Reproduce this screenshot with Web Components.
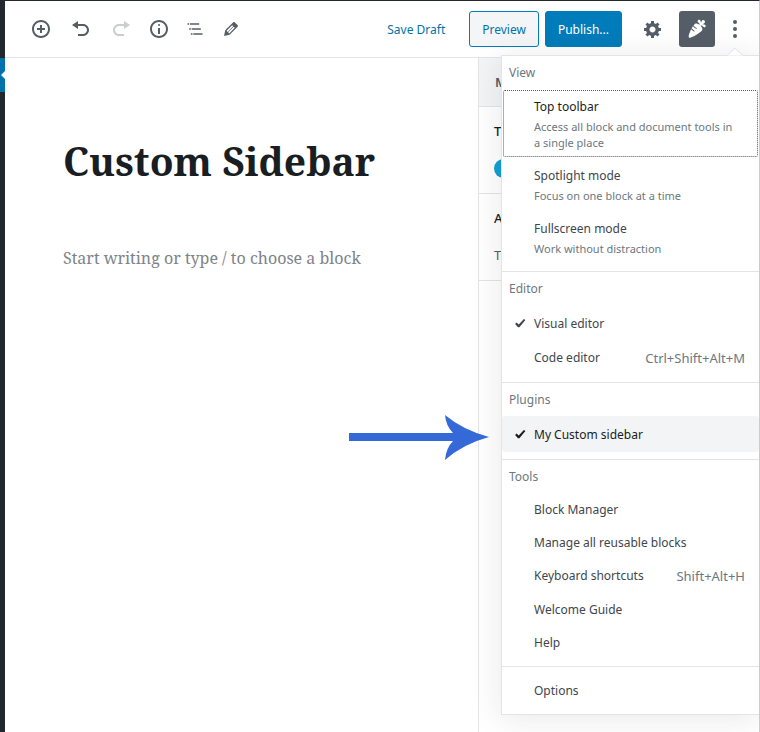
<!DOCTYPE html>
<html lang="en">
<head>
<meta charset="utf-8">
<title>Custom Sidebar</title>
<style>
    body {
        margin: 0;
        font-family: "Segoe UI", "Noto Sans", sans-serif;
        font-size: 12px;
        color: #191e23;
    }
</style>
</head>
<body>
<editor-app>
    <editor-header slot="header"></editor-header>
    <editor-canvas></editor-canvas>
    <settings-sidebar></settings-sidebar>
    <more-menu slot="menu">
        <menu-group label="View">
            <menu-item class="focused" info="Access all block and document tools in a single place">Top toolbar</menu-item>
            <menu-item info="Focus on one block at a time">Spotlight mode</menu-item>
            <menu-item info="Work without distraction">Fullscreen mode</menu-item>
        </menu-group>
        <menu-group label="Editor">
            <menu-item checked>Visual editor</menu-item>
            <menu-item shortcut="Ctrl+Shift+Alt+M">Code editor</menu-item>
        </menu-group>
        <menu-group label="Plugins">
            <menu-item class="hovered" checked>My Custom sidebar</menu-item>
        </menu-group>
        <menu-group label="Tools">
            <menu-item>Block Manager</menu-item>
            <menu-item>Manage all reusable blocks</menu-item>
            <menu-item shortcut="Shift+Alt+H">Keyboard shortcuts</menu-item>
            <menu-item>Welcome Guide</menu-item>
            <menu-item>Help</menu-item>
        </menu-group>
        <menu-group>
            <menu-item>Options</menu-item>
        </menu-group>
    </more-menu>
    <pointer-arrow slot="menu"></pointer-arrow>
</editor-app>

<script>
// 20x20 icons, except where a viewBox is given
const ICONS = {
    insert: { d: 'M10 1c-5 0-9 4-9 9s4 9 9 9 9-4 9-9-4-9-9-9zm0 16c-3.9 0-7-3.1-7-7s3.1-7 7-7 7 3.1 7 7-3.1 7-7 7zm1-11H9v3H6v2h3v3h2v-3h3V9h-3V6z' },
    undo: { d: 'M12 5H7V2L1 6l6 4V7h5c2.2 0 4 1.8 4 4s-1.8 4-4 4H7v2h5c3.3 0 6-2.7 6-6s-2.7-6-6-6z' },
    redo: { d: 'M8 5h5V2l6 4-6 4V7H8c-2.2 0-4 1.8-4 4s1.8 4 4 4h5v2H8c-3.3 0-6-2.7-6-6s2.7-6 6-6z' },
    info: { d: 'M9 15h2V9H9v6zm1-10c-.5 0-1 .5-1 1s.5 1 1 1 1-.5 1-1-.5-1-1-1zm0-4c-5 0-9 4-9 9s4 9 9 9 9-4 9-9-4-9-9-9zm0 16c-3.9 0-7-3.1-7-7s3.1-7 7-7 7 3.1 7 7-3.1 7-7 7z' },
    outline: { d: 'M5 5H3v2h2V5zm3 8h11v-2H8v2zm9-8H6v2h11V5zM7 11H5v2h2v-2zm0 8h2v-2H7v2zm3-2v2h11v-2H10z', viewBox: '0 0 24 24' },
    edit: { d: 'M13.89 3.39l2.71 2.72c.46.46.42 1.24.03 1.64l-8.01 8.02-5.56 1.16 1.16-5.58s7.6-7.63 7.99-8.03c.39-.39 1.22-.39 1.68.07zm-2.73 2.79l-5.59 5.61 1.11 1.11 5.54-5.65zm-2.97 8.23l5.58-5.6-1.07-1.08-5.59 5.6z' },
    gear: { d: 'M18 12h-2.18c-.17.7-.44 1.35-.81 1.93l1.54 1.54-2.1 2.1-1.54-1.54c-.58.36-1.23.63-1.91.79V19H8v-2.18c-.68-.16-1.33-.43-1.91-.79l-1.54 1.54-2.12-2.12 1.54-1.54c-.36-.58-.63-1.23-.79-1.91H1V9.03h2.17c.16-.7.44-1.35.8-1.94L2.43 5.55l2.1-2.1 1.54 1.54c.58-.37 1.24-.64 1.93-.81V2h3v2.18c.68.16 1.33.43 1.91.79l1.54-1.54 2.12 2.12-1.54 1.54c.36.59.64 1.24.8 1.94H18V12zm-8.5 1.5c1.66 0 3-1.34 3-3s-1.34-3-3-3-3 1.34-3 3 1.34 3 3 3z' },
    carrot: { d: 'M2 18.43c1.51 1.36 11.64-4.67 13.14-7.21.72-1.22-.13-3.01-1.52-4.44C15.2 5.73 16.59 9 17.91 8.31c.6-.32.99-1.31.7-1.92-.52-1.08-2.25-1.08-3.42-1.21.83-.2 2.82-1.05 2.86-2.25.04-.92-1.13-1.97-2.05-1.86-1.21.14-1.65 1.88-2.06 3-.05-.71-.2-2.27-.98-2.95-1.04-.91-2.29-.05-2.32 1.05-.04 1.33 2.82 2.07 1.92 3.67C11.04 4.67 9.25 4.03 8.1 4.7c-.49.31-1.05.91-1.63 1.69.89.94 2.12 2.07 3.09 2.72.2.14.26.42.11.62-.14.21-.42.26-.62.12-.99-.67-2.2-1.78-3.1-2.71-.45.67-.91 1.43-1.34 2.23.85.86 1.93 1.83 2.79 2.41.2.14.25.42.11.62-.14.21-.42.26-.63.12-.85-.58-1.86-1.48-2.71-2.32C2.4 13.69 1.1 17.63 2 18.43z' },
    more: { d: 'M8 3a2 2 0 1 0 4 0a2 2 0 1 0-4 0zm0 7a2 2 0 1 0 4 0a2 2 0 1 0-4 0zm0 7a2 2 0 1 0 4 0a2 2 0 1 0-4 0z' },
    yes: { d: 'M14.9 4.9l1.5 1.2-6 7.2H9L6.1 10l1.5-1.6 2.1 2.1z' }
};

function icon(name) {
    const i = ICONS[name];
    return `<svg width="20" height="20" viewBox="${i.viewBox || '0 0 20 20'}" fill="currentColor" aria-hidden="true"><path d="${i.d}"/></svg>`;
}

class EditorApp extends HTMLElement {
    constructor() {
        super();
        const shadowRoot = this.attachShadow({ mode: 'open' });
        shadowRoot.innerHTML = `
            <style>
                :host {
                    display: flex;
                    box-sizing: border-box;
                    min-height: 100vh;
                    border-top: 1px solid #23282d;
                    border-right: 1px solid #ccc;
                    background: #fff;
                }
                .admin-bar {
                    flex: none;
                    width: 5px;
                    background: #23282d;
                }
                .current {
                    display: flex;
                    align-items: center;
                    justify-content: flex-end;
                    height: 34px;
                    margin-top: 57px;
                    background: #0073aa;
                }
                .current svg {
                    display: block;
                }
                .page {
                    position: relative;
                    display: flex;
                    flex: 1;
                    flex-direction: column;
                    min-width: 0;
                    overflow: hidden;
                }
                .body {
                    display: flex;
                    flex: 1;
                }
            </style>
            <div class="admin-bar">
                <div class="current">
                    <svg width="4" height="8" viewBox="0 0 4 8" fill="#fff"><path d="M4 0v8L0 4z"/></svg>
                </div>
            </div>
            <div class="page">
                <slot name="header"></slot>
                <div class="body"><slot></slot></div>
                <slot name="menu"></slot>
            </div>
        `;
    }
}

class IconButton extends HTMLElement {
    constructor() {
        super();
        let el = this;
        const shadowRoot = el.attachShadow({ mode: 'open' });
        const disabled = el.hasAttribute('disabled') ? 'disabled' : '';
        shadowRoot.innerHTML = `
            <style>
                :host {
                    display: block;
                }
                button {
                    display: flex;
                    align-items: center;
                    justify-content: center;
                    width: var(--button-width, 36px);
                    height: 36px;
                    padding: 0;
                    border: 0;
                    border-radius: 3px;
                    background: none;
                    color: #555d66;
                }
                button:disabled {
                    opacity: .3;
                }
                :host([toggled]) button {
                    background: #555d66;
                    color: #fff;
                }
            </style>
            <button type="button" aria-label="${el.getAttribute('label')}" ${disabled}>${icon(el.getAttribute('icon'))}</button>
        `;
    }
}

class EditorHeader extends HTMLElement {
    constructor() {
        super();
        const shadowRoot = this.attachShadow({ mode: 'open' });
        shadowRoot.innerHTML = `
            <style>
                :host {
                    display: flex;
                    align-items: center;
                    justify-content: space-between;
                    height: 56px;
                    padding: 0 12px 0 18px;
                    border-bottom: 1px solid #e2e4e7;
                }
                div {
                    display: flex;
                    align-items: center;
                }
                .tools {
                    gap: 2px;
                }
                .history {
                    gap: 4px;
                }
                .actions {
                    gap: 6px;
                }
                .settings {
                    gap: 8px;
                    margin-left: 7px;
                }
                .narrow {
                    --button-width: 24px;
                }
                .text {
                    height: 36px;
                    padding: 0 12px;
                    border: 1px solid #007cba;
                    border-radius: 3px;
                    background: #f3f5f6;
                    color: #0073aa;
                    font: inherit;
                }
                .primary {
                    background: #007cba;
                    color: #fff;
                }
                .link {
                    padding: 0 18px;
                    border: 0;
                    background: none;
                }
            </style>
            <div class="tools">
                <div class="history">
                    <icon-button icon="insert" label="Add block"></icon-button>
                    <icon-button icon="undo" label="Undo"></icon-button>
                    <icon-button icon="redo" label="Redo" disabled></icon-button>
                </div>
                <div>
                    <icon-button icon="info" label="Content structure"></icon-button>
                    <icon-button icon="outline" label="Block navigation"></icon-button>
                    <icon-button icon="edit" label="Edit"></icon-button>
                </div>
            </div>
            <div class="actions">
                <button type="button" class="text link">Save Draft</button>
                <button type="button" class="text">Preview</button>
                <button type="button" class="text primary">Publish...</button>
                <div class="settings">
                    <icon-button icon="gear" label="Settings"></icon-button>
                    <icon-button icon="carrot" label="My Custom sidebar" toggled></icon-button>
                    <icon-button icon="more" label="More tools &amp; options" class="narrow"></icon-button>
                </div>
            </div>
        `;
    }
}

class EditorCanvas extends HTMLElement {
    constructor() {
        super();
        const shadowRoot = this.attachShadow({ mode: 'open' });
        shadowRoot.innerHTML = `
            <style>
                :host {
                    display: block;
                    flex: 1;
                    min-width: 0;
                    padding: 74px 58px;
                    font-family: "Noto Serif", "DejaVu Serif Condensed", "DejaVu Serif", serif;
                }
                input {
                    display: block;
                    box-sizing: border-box;
                    width: 100%;
                    padding: 0;
                    border: 0;
                    background: none;
                    font: inherit;
                }
                .title {
                    height: 56px;
                    color: #191e23;
                    font-size: 39px;
                    font-weight: bold;
                }
                .block {
                    height: 28px;
                    margin-top: 56px;
                    color: #7e8388;
                    font-size: 16px;
                }
            </style>
            <input class="title" type="text" aria-label="Add title" value="Custom Sidebar">
            <input class="block" type="text" aria-label="Add block" value="Start writing or type / to choose a block">
        `;
    }
}

class SettingsSidebar extends HTMLElement {
    constructor() {
        super();
        const shadowRoot = this.attachShadow({ mode: 'open' });
        shadowRoot.innerHTML = `
            <style>
                :host {
                    display: block;
                    flex: none;
                    width: 280px;
                    border-left: 1px solid #e2e4e7;
                    font-size: 13px;
                }
                header {
                    display: flex;
                    align-items: center;
                    height: 48px;
                    padding: 0 16px;
                    border-bottom: 1px solid #e2e4e7;
                    background: #f3f4f5;
                    color: #555d66;
                    font-weight: 600;
                }
                section {
                    display: flex;
                    flex-direction: column;
                    gap: 18px;
                    padding: 15px;
                    border-bottom: 1px solid #e2e4e7;
                }
                h2, p {
                    margin: 0;
                    font-size: 13px;
                    line-height: 19px;
                }
                h2 {
                    font-weight: 500;
                }
                p {
                    color: #555d66;
                }
                input {
                    appearance: none;
                    width: 32px;
                    height: 19px;
                    margin: 0;
                    border-radius: 10px;
                    background: #11a0d2;
                }
            </style>
            <header>M</header>
            <section>
                <h2>T</h2>
                <input type="checkbox" aria-label="Toggle" checked>
            </section>
            <section>
                <h2>A</h2>
                <p>T</p>
            </section>
        `;
    }
}

class MoreMenu extends HTMLElement {
    constructor() {
        super();
        const shadowRoot = this.attachShadow({ mode: 'open' });
        shadowRoot.innerHTML = `
            <style>
                :host {
                    position: absolute;
                    top: 54px;
                    right: 0;
                    width: 257px;
                    border: 1px solid #e2e4e7;
                    border-right: 0;
                    background: #fff;
                    box-shadow: 0 3px 30px rgba(25, 30, 35, .1);
                }
                svg {
                    position: absolute;
                    top: -9px;
                    right: 15px;
                }
            </style>
            <svg width="18" height="10" viewBox="0 0 18 10" fill="#fff" stroke="#e2e4e7">
                <path d="M1 8.5L9 1l8 7.5" />
                <path d="M1 9.5h16" stroke="#fff" />
            </svg>
            <div role="menu"><slot></slot></div>
        `;
    }
}

class MenuGroup extends HTMLElement {
    constructor() {
        super();
        let el = this;
        const label = el.getAttribute('label');
        const shadowRoot = el.attachShadow({ mode: 'open' });
        shadowRoot.innerHTML = `
            <style>
                :host {
                    display: block;
                    padding-bottom: 7px;
                    border-top: 1px solid #e2e4e7;
                }
                :host(:first-child) {
                    border-top: 0;
                }
                :host(:not([label])) {
                    padding-top: 7px;
                }
                .label {
                    padding: 0 7px;
                    color: #6c7781;
                    line-height: 33px;
                }
            </style>
            ${label ? `<div class="label">${label}</div>` : ''}
            <div role="group"><slot></slot></div>
        `;
    }
}

class MenuItem extends HTMLElement {
    constructor() {
        super();
        let el = this;
        const info = el.getAttribute('info');
        const shortcut = el.getAttribute('shortcut');
        const checked = el.hasAttribute('checked');
        const shadowRoot = el.attachShadow({ mode: 'open' });
        shadowRoot.innerHTML = `
            <style>
                :host {
                    display: block;
                }
                button {
                    display: flex;
                    align-items: center;
                    width: 100%;
                    min-height: 33px;
                    padding: 0 14px 0 32px;
                    border: 0;
                    border-radius: 3px;
                    background: none;
                    color: #40464d;
                    font: inherit;
                    line-height: 18px;
                    text-align: left;
                }
                :host([info]) button {
                    flex-direction: column;
                    align-items: flex-start;
                    gap: 3px;
                    padding: 9px 20px 7px 32px;
                }
                :host([shortcut]) button {
                    justify-content: space-between;
                    min-height: 34px;
                }
                :host([checked]) button {
                    gap: 5px;
                    min-height: 36px;
                    padding-top: 2px;
                    padding-left: 7px;
                }
                :host(.focused) button {
                    outline: 1px dotted #555d66;
                    outline-offset: -2px;
                    color: #191e23;
                }
                :host(.hovered) button {
                    background: #f3f4f5;
                    color: #191e23;
                }
                .info {
                    color: #6c7781;
                    font-size: 11px;
                    line-height: 16px;
                }
                .shortcut {
                    color: #6c7781;
                    font-size: 13px;
                }
            </style>
            <button type="button" role="${checked ? 'menuitemcheckbox' : 'menuitem'}" ${checked ? 'aria-checked="true"' : ''}>
                ${checked ? icon('yes') : ''}
                <span><slot></slot></span>
                ${info ? `<span class="info">${info}</span>` : ''}
                ${shortcut ? `<span class="shortcut">${shortcut}</span>` : ''}
            </button>
        `;
    }
}

// points at the plugin entry of the menu
class PointerArrow extends HTMLElement {
    constructor() {
        super();
        const shadowRoot = this.attachShadow({ mode: 'open' });
        shadowRoot.innerHTML = `
            <style>
                :host {
                    position: absolute;
                    top: 414px;
                    right: 270px;
                }
                svg {
                    display: block;
                }
            </style>
            <svg width="140" height="45" viewBox="0 0 140 45" fill="#3569d7" aria-hidden="true">
                <path d="M0 18h104Q97 11 96 0Q114 15 140 22Q114 29 96 45Q97 33 104 26H0z"/>
            </svg>
        `;
    }
}

window.customElements.define('editor-app', EditorApp);
window.customElements.define('icon-button', IconButton);
window.customElements.define('editor-header', EditorHeader);
window.customElements.define('editor-canvas', EditorCanvas);
window.customElements.define('settings-sidebar', SettingsSidebar);
window.customElements.define('more-menu', MoreMenu);
window.customElements.define('menu-group', MenuGroup);
window.customElements.define('menu-item', MenuItem);
window.customElements.define('pointer-arrow', PointerArrow);
</script>
</body>
</html>
